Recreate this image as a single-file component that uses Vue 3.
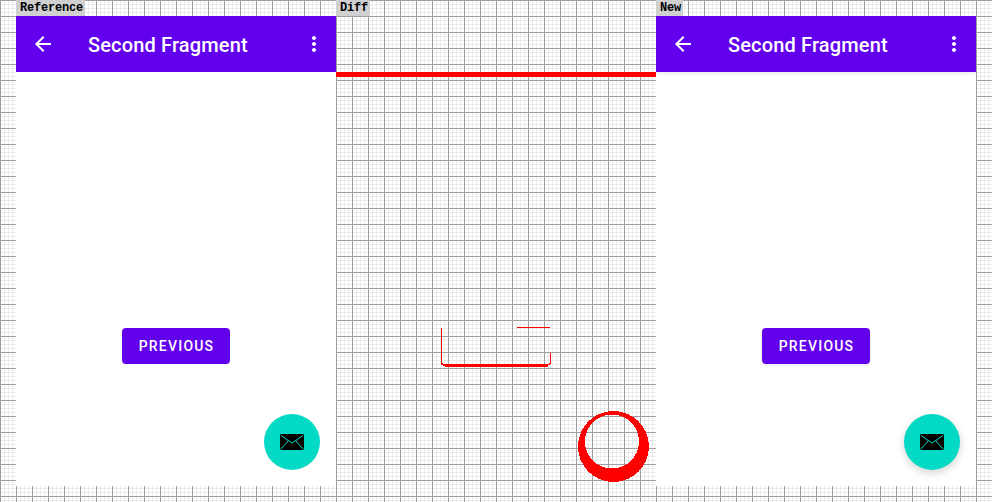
<template>
  <div class="sheet">
    <section v-for="panel in panels" :key="panel.label" class="column">
      <span class="label">{{ panel.label }}</span>

      <svg v-if="panel.diff" class="diff" viewBox="0 0 320 470" width="320" height="470">
        <rect x="0" y="56" width="320" height="5" />
        <path d="M105 312h1v35h-1z M181 311h33v1h-33z M214 337h1v10h-1z" />
        <path d="M109 348h103v3h-103z M105 347h2v1h2v2h-2v-1h-2z M212 348h1v-1h2v1h-1v1h-2z" />
        <path
          fill-rule="evenodd"
          d="M242 430.500a35.500 35.500 0 1 0 71 0a35.500 35.500 0 1 0 -71 0z M249 425.500a27 27 0 1 0 54 0a27 27 0 1 0 -54 0z"
        />
      </svg>

      <div v-else class="screen" :class="{ raised: panel.raised }">
        <header class="toolbar">
          <svg class="icon" viewBox="0 0 24 24" width="24" height="24">
            <path fill="#fff" d="M20 11H7.830l5.590-5.590L12 4l-8 8 8 8 1.410-1.410L7.830 13H20v-2z" />
          </svg>
          <h1 class="title">Second Fragment</h1>
          <svg class="icon" viewBox="0 0 24 24" width="24" height="24">
            <path
              fill="#fff"
              d="M12 8c1.100 0 2-.9 2-2s-.9-2-2-2-2 .9-2 2 .9 2 2 2zm0 2c-1.100 0-2 .9-2 2s.9 2 2 2 2-.9 2-2-.9-2-2-2zm0 6c-1.100 0-2 .9-2 2s.9 2 2 2 2-.9 2-2-.9-2-2-2z"
            />
          </svg>
        </header>
        <main class="content">
          <button class="previous" type="button">Previous</button>
        </main>
        <button class="fab" type="button" aria-label="Send mail">
          <svg viewBox="0 0 24 16" width="24" height="16">
            <rect width="24" height="16" rx="1" fill="#000" />
            <path d="M1 1.500l11 7.500 11-7.500M.6 15.500l7.500-8.500M23.400 15.500l-7.500-8.500" fill="none" stroke="#03dac5" stroke-width="1" />
          </svg>
        </button>
      </div>
    </section>
  </div>
</template>

<script setup>
const panels = [
  { label: 'Reference' },
  { label: 'Diff', diff: true },
  { label: 'New', raised: true },
]
</script>

<style>
html,
body {
  background: #fff;
}
</style>

<style scoped>
.sheet {
  display: flex;
  height: 502px;
  padding-left: 16px;
  background-color: #fff;
  background-image:
    linear-gradient(to right, #a0a0a0 1px, transparent 1px),
    linear-gradient(to bottom, #a0a0a0 1px, transparent 1px),
    linear-gradient(to right, #ebebeb 1px, transparent 1px),
    linear-gradient(to bottom, #ebebeb 1px, transparent 1px);
  background-size: 16px 16px, 16px 16px, 4px 4px, 4px 4px;
}

.column {
  display: flex;
  flex-direction: column;
  align-items: flex-start;
  width: 320px;
}

.label {
  height: 16px;
  padding: 0 2px 0 4px;
  background: #d0d0d0;
  color: #000;
  font: bold 12px/16px 'Liberation Mono', monospace;
  letter-spacing: -0.2px;
}

.diff {
  display: block;
  fill: #f00;
  shape-rendering: crispEdges;
}

.screen {
  position: relative;
  display: flex;
  flex-direction: column;
  width: 320px;
  height: 470px;
  overflow: hidden;
  background: #fff;
  font-family: Roboto, sans-serif;
}

.toolbar {
  position: relative;
  z-index: 1;
  display: flex;
  align-items: center;
  height: 56px;
  padding: 0 10px 0 15px;
  background: #6200ee;
  color: #fff;
}

.title {
  flex: 1;
  margin: 0 0 0 33px;
  padding-top: 2px;
  font-size: 20px;
  font-weight: 500;
  letter-spacing: 0.15px;
}

.content {
  display: flex;
  flex: 1;
  flex-direction: column;
  align-items: center;
  padding-top: 256px;
}

.previous {
  width: 108px;
  height: 36px;
  padding: 0 0 0 1px;
  border: 0;
  border-radius: 4px;
  background: #6200ee;
  color: #fff;
  font-family: inherit;
  font-size: 14px;
  font-weight: 500;
  letter-spacing: 1.2px;
  text-transform: uppercase;
}

.fab {
  position: absolute;
  right: 16px;
  bottom: 16px;
  display: grid;
  place-items: center;
  width: 56px;
  height: 56px;
  padding: 0;
  border: 0;
  border-radius: 50%;
  background: #03dac5;
}

.raised .toolbar {
  box-shadow: 0 2px 4px rgba(0, 0, 0, 0.08);
}

.raised .previous {
  box-shadow: 0 1px 3px rgba(0, 0, 0, 0.1);
}

.raised .fab {
  box-shadow: 0 4px 8px rgba(0, 0, 0, 0.12), 0 1px 8px rgba(0, 0, 0, 0.06);
}
</style>
